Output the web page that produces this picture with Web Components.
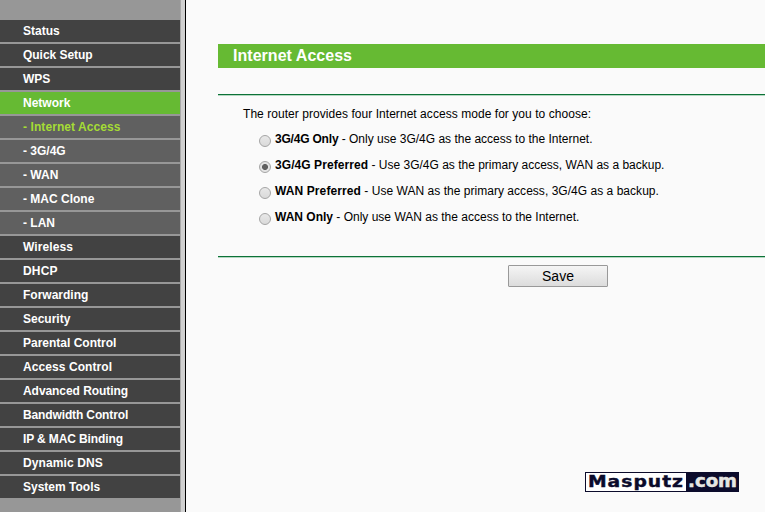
<!DOCTYPE html>
<html lang="en">
<head>
  <meta charset="UTF-8">
  <title>Internet Access</title>
  <style>
    body {
      margin: 0;
      font-family: "Liberation Sans", Arial, sans-serif;
      background: #fafafa;
      overflow: hidden;
    }
  </style>
</head>
<body>
  <router-page>
    <side-menu slot="menu">
      <menu-item>Status</menu-item>
      <menu-item style="letter-spacing: -.04px">Quick Setup</menu-item>
      <menu-item style="letter-spacing: -.1px">WPS</menu-item>
      <menu-item active>Network</menu-item>
      <menu-item sub current style="letter-spacing: .08px">- Internet Access</menu-item>
      <menu-item sub>- 3G/4G</menu-item>
      <menu-item sub>- WAN</menu-item>
      <menu-item sub>- MAC Clone</menu-item>
      <menu-item sub>- LAN</menu-item>
      <menu-item style="letter-spacing: .08px">Wireless</menu-item>
      <menu-item style="letter-spacing: .2px">DHCP</menu-item>
      <menu-item>Forwarding</menu-item>
      <menu-item>Security</menu-item>
      <menu-item>Parental Control</menu-item>
      <menu-item style="letter-spacing: .08px">Access Control</menu-item>
      <menu-item style="letter-spacing: -.06px">Advanced Routing</menu-item>
      <menu-item style="letter-spacing: -.13px">Bandwidth Control</menu-item>
      <menu-item style="letter-spacing: -.12px">IP &amp; MAC Binding</menu-item>
      <menu-item style="letter-spacing: .1px">Dynamic DNS</menu-item>
      <menu-item>System Tools</menu-item>
    </side-menu>
    <settings-panel heading="Internet Access">
      <span slot="intro">The router provides four Internet access mode for you to choose:</span>
      <access-option name="3G/4G Only" style="--name-spacing: -.2px">Only use 3G/4G as the access to the Internet.</access-option>
      <access-option name="3G/4G Preferred" style="--name-spacing: .07px" checked>Use 3G/4G as the primary access, WAN as a backup.</access-option>
      <access-option name="WAN Preferred" style="--name-spacing: .1px; letter-spacing: .03px">Use WAN as the primary access, 3G/4G as a backup.</access-option>
      <access-option name="WAN Only">Only use WAN as the access to the Internet.</access-option>
      <save-button slot="actions">Save</save-button>
    </settings-panel>
    <site-mark slot="mark"></site-mark>
  </router-page>

  <script>
    class BaseElement extends HTMLElement {
      constructor() {
        super();
        this.attachShadow({ mode: 'open' });
      }

      connectedCallback() {
        const template = document.createElement('template');
        template.innerHTML = `<style>${this.getStyles()}</style>${this.getMarkup()}`;
        this.shadowRoot.replaceChildren(template.content.cloneNode(true));
      }
    }

    class RouterPage extends BaseElement {
      getMarkup() {
        return `
          <slot name="menu"></slot>
          <main><slot></slot></main>
          <slot name="mark"></slot>
        `;
      }

      getStyles() {
        return `
          :host {
            display: flex;
            position: relative;
            height: 512px;
          }
          main {
            flex: 1;
            min-width: 0;
            padding: 44px 0 0 32px;
          }
        `;
      }
    }

    class SideMenu extends BaseElement {
      getMarkup() {
        return '<nav><slot></slot></nav><div class="divider"></div>';
      }

      getStyles() {
        return `
          :host {
            display: flex;
            width: 186px;
            flex: none;
          }
          nav {
            display: flex;
            flex-direction: column;
            gap: 2px;
            width: 180px;
            padding-top: 20px;
            background: #979797;
          }
          .divider {
            box-sizing: border-box;
            width: 6px;
            background: #d0d0d0;
            border-left: 1px solid #a8a8a8;
            border-right: 1px solid #000;
          }
        `;
      }
    }

    class MenuItem extends BaseElement {
      getMarkup() {
        return '<slot></slot>';
      }

      getStyles() {
        return `
          :host {
            display: block;
            height: 22px;
            padding-left: 23px;
            background: #424242;
            color: #fff;
            font-size: 12px;
            font-weight: bold;
            line-height: 22px;
            white-space: nowrap;
          }
          :host([active]) { background: #66ba33; }
          :host([sub]) { background: #606060; }
          :host([current]) { color: #a5dc35; }
        `;
      }
    }

    class SettingsPanel extends BaseElement {
      getMarkup() {
        return `
          <h1>${this.getAttribute('heading')}</h1>
          <div class="rule"></div>
          <section>
            <p><slot name="intro"></slot></p>
            <div class="options"><slot></slot></div>
          </section>
          <div class="rule"></div>
          <div class="actions"><slot name="actions"></slot></div>
        `;
      }

      getStyles() {
        return `
          :host {
            display: block;
            font-size: 12px;
            color: #000;
          }
          h1 {
            margin: 0 0 26px;
            padding-left: 15px;
            height: 24px;
            background: #66ba33;
            color: #fff;
            font-size: 16px;
            line-height: 24px;
            letter-spacing: .03px;
          }
          .rule {
            height: 1px;
            background: #0c7237;
            border-bottom: 1px solid #b4d7c1;
          }
          section {
            box-sizing: border-box;
            height: 160px;
            padding: 10px 0 0 25px;
          }
          p {
            margin: 0;
            line-height: 16px;
            letter-spacing: .05px;
          }
          .options {
            padding: 4px 0 0 16px;
          }
          .actions {
            padding: 7px 0 0 290px;
          }
        `;
      }
    }

    class AccessOption extends BaseElement {
      getMarkup() {
        return `
          <i></i>
          <div><b>${this.getAttribute('name')}</b> - <slot></slot></div>
        `;
      }

      getStyles() {
        return `
          :host {
            display: flex;
            align-items: center;
            gap: 4px;
            height: 26px;
            white-space: nowrap;
          }
          i {
            box-sizing: border-box;
            width: 12px;
            height: 12px;
            margin-top: 4px;
            border: 1px solid #a5a5a5;
            border-radius: 50%;
            background: linear-gradient(#e8e8e8, #dadada);
          }
          :host([checked]) i {
            background: radial-gradient(circle, #606060 0 2.6px, #e4e4e4 3.4px);
          }
          b { letter-spacing: var(--name-spacing, normal); }
          div { line-height: 16px; }
        `;
      }
    }

    class SaveButton extends BaseElement {
      getMarkup() {
        return '<button><slot></slot></button>';
      }

      getStyles() {
        return `
          :host { display: block; }
          button {
            display: block;
            width: 100px;
            height: 22px;
            padding: 0;
            border: 1px solid #999;
            border-radius: 1px;
            background: linear-gradient(#f5f5f5, #dcdcdc);
            color: #000;
            font: 14px/20px "Liberation Sans", Arial, sans-serif;
          }
        `;
      }
    }

    // Watermark floating above the page, bottom right
    class SiteMark extends BaseElement {
      getMarkup() {
        return `
          <svg width="154" height="20" viewBox="0 0 154 20">
            <rect width="154" height="20" fill="#0b0b2b"/>
            <rect x="1" y="1" width="100" height="18" fill="#fff"/>
            <g transform="translate(3 15) scale(1.25 1)">
              <text class="name" textLength="76" fill="#0b0b2b">Masputz</text>
            </g>
            <text class="domain" x="103" y="15" textLength="49" lengthAdjust="spacingAndGlyphs" fill="#e6e6e2">.com</text>
          </svg>
        `;
      }

      getStyles() {
        return `
          :host {
            position: absolute;
            left: 585px;
            top: 472px;
          }
          svg { display: block; }
          .name {
            font: bold 15px "DejaVu Sans", sans-serif;
            stroke: #0b0b2b;
            stroke-width: .4;
          }
          .domain {
            font: bold 17px "DejaVu Sans", sans-serif;
            stroke: #e6e6e2;
            stroke-width: .5;
          }
        `;
      }
    }

    customElements.define('router-page', RouterPage);
    customElements.define('side-menu', SideMenu);
    customElements.define('menu-item', MenuItem);
    customElements.define('settings-panel', SettingsPanel);
    customElements.define('access-option', AccessOption);
    customElements.define('save-button', SaveButton);
    customElements.define('site-mark', SiteMark);
  </script>
</body>
</html>
